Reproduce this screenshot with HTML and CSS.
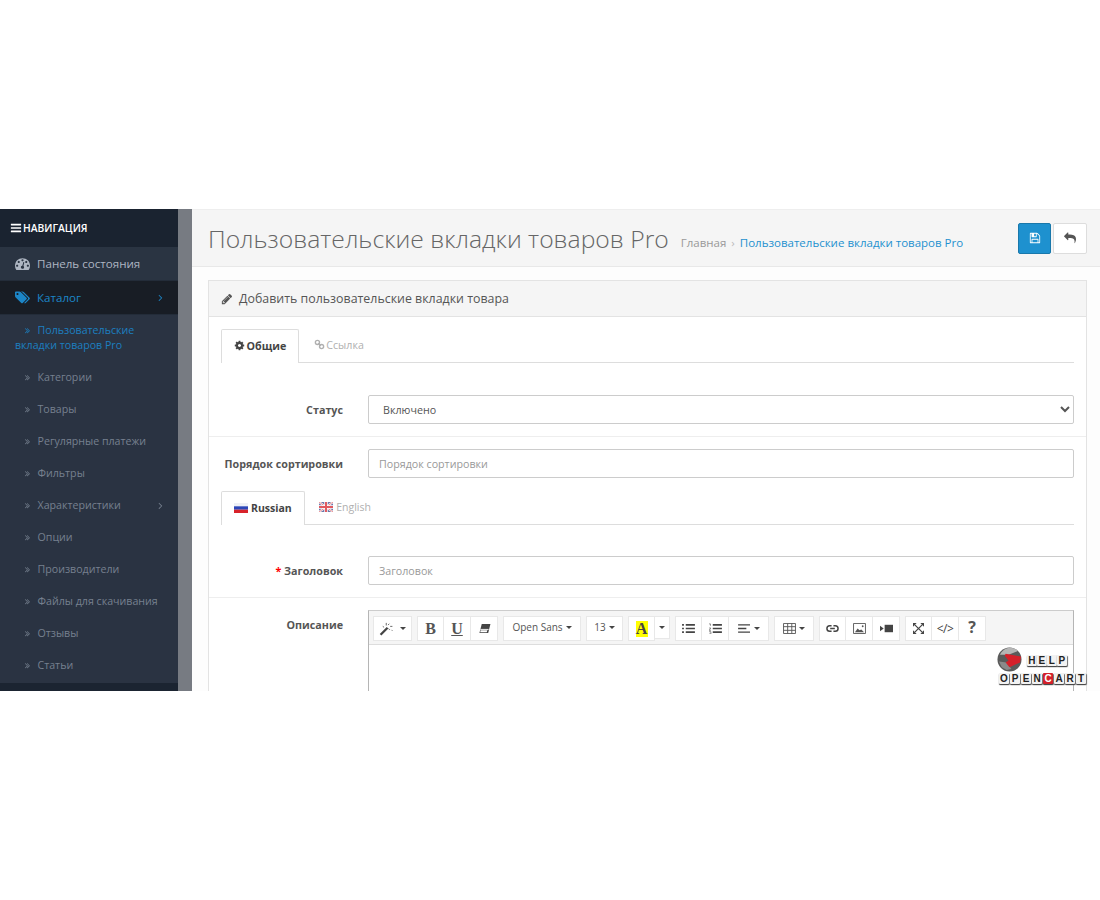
FILE: index.html
```html
<!DOCTYPE html>
<html>

<head>
    <meta charset="UTF-8">
    <title>Пользовательские вкладки товаров Pro</title>
    <link rel="stylesheet" href="styles.css">
</head>

<body>

    <svg class="sprite" xmlns="http://www.w3.org/2000/svg">
        <symbol id="i-bars" viewBox="0 0 1792 1792"><path d="M1664 1344v128q0 26-19 45t-45 19h-1408q-26 0-45-19t-19-45v-128q0-26 19-45t45-19h1408q26 0 45 19t19 45zm0-512v128q0 26-19 45t-45 19h-1408q-26 0-45-19t-19-45v-128q0-26 19-45t45-19h1408q26 0 45 19t19 45zm0-512v128q0 26-19 45t-45 19h-1408q-26 0-45-19t-19-45v-128q0-26 19-45t45-19h1408q26 0 45 19t19 45z"/></symbol>
        <symbol id="i-gauge" viewBox="0 0 1792 1792"><path d="M384 1152q0-53-37.5-90.5t-90.5-37.5-90.5 37.5-37.5 90.5 37.5 90.5 90.5 37.5 90.5-37.5 37.5-90.5zm192-448q0-53-37.5-90.5t-90.5-37.5-90.5 37.5-37.5 90.5 37.5 90.5 90.5 37.5 90.5-37.5 37.5-90.5zm428 481l101-382q6-26-7.5-48.5t-38.5-29.5-48 6.5-30 39.5l-101 382q-60 5-107 43.5t-63 98.5q-20 77 20 146t117 89 146-20 89-117q16-60-6-117t-72-91zm660-33q0-53-37.5-90.5t-90.5-37.5-90.5 37.5-37.5 90.5 37.5 90.5 90.5 37.5 90.5-37.5 37.5-90.5zm-640-640q0-53-37.5-90.5t-90.5-37.5-90.5 37.5-37.5 90.5 37.5 90.5 90.5 37.5 90.5-37.5 37.5-90.5zm448 192q0-53-37.5-90.5t-90.5-37.5-90.5 37.5-37.5 90.5 37.5 90.5 90.5 37.5 90.5-37.5 37.5-90.5zm320 448q0 261-141 483-19 29-54 29h-1402q-35 0-54-29-141-221-141-483 0-182 71-348t191-286 286-191 348-71 348 71 286 191 191 286 71 348z"/></symbol>
        <symbol id="i-tags" viewBox="0 0 1920 1792"><path d="M448 448q0-53-37.5-90.5t-90.5-37.5-90.5 37.5-37.5 90.5 37.5 90.5 90.5 37.5 90.5-37.5 37.5-90.5zm1067 576q0 53-37 90l-491 492q-39 37-91 37-53 0-90-37l-715-716q-38-37-64.5-101t-26.5-117v-416q0-52 38-90t90-38h416q53 0 117 26.5t102 64.5l715 714q37 39 37 91zm384 0q0 53-37 90l-491 492q-38 37-90 37-36 0-59-14t-53-45l470-470q37-37 37-90 0-52-37-91l-715-714q-38-38-102-64.5t-117-26.5h224q53 0 117 26.5t102 64.5l715 714q37 39 37 91z"/></symbol>
        <symbol id="i-angle" viewBox="0 0 1792 1792"><path d="M1171 960q0 13-10 23l-466 466q-10 10-23 10t-23-10l-50-50q-10-10-10-23t10-23l393-393-393-393q-10-10-10-23t10-23l50-50q10-10 23-10t23 10l466 466q10 10 10 23z"/></symbol>
        <symbol id="i-angles" viewBox="0 0 1792 1792"><path d="M979 960q0 13-10 23l-466 466q-10 10-23 10t-23-10l-50-50q-10-10-10-23t10-23l393-393-393-393q-10-10-10-23t10-23l50-50q10-10 23-10t23 10l466 466q10 10 10 23zm384 0q0 13-10 23l-466 466q-10 10-23 10t-23-10l-50-50q-10-10-10-23t10-23l393-393-393-393q-10-10-10-23t10-23l50-50q10-10 23-10t23 10l466 466q10 10 10 23z"/></symbol>
        <symbol id="i-pencil" viewBox="0 0 1792 1792"><path d="M491 1536l91-91-235-235-91 91v107h128v128h107zm523-928q0-22-22-22-10 0-17 7l-542 542q-7 7-7 17 0 22 22 22 10 0 17-7l542-542q7-7 7-17zm-54-192l416 416-832 832h-416v-416zm683 96q0 53-37 90l-166 166-416-416 166-165q36-38 90-38 53 0 91 38l235 234q37 39 37 91z"/></symbol>
        <symbol id="i-save" viewBox="0 0 1792 1792"><path d="M512 1536h768v-384h-768v384zm896 0h128v-896q0-14-10-38.5t-20-34.5l-281-281q-10-10-34-20t-39-10v416q0 40-28 68t-68 28h-576q-40 0-68-28t-28-68v-416h-128v1280h128v-416q0-40 28-68t68-28h832q40 0 68 28t28 68v416zm-384-928v-320q0-13-9.5-22.5t-22.5-9.5h-192q-13 0-22.5 9.5t-9.5 22.5v320q0 13 9.5 22.5t22.5 9.5h192q13 0 22.5-9.5t9.5-22.5zm640 32v928q0 40-28 68t-68 28h-1344q-40 0-68-28t-28-68v-1344q0-40 28-68t68-28h928q40 0 88 20t76 48l280 280q28 28 48 76t20 88z"/></symbol>
        <symbol id="i-reply" viewBox="0 0 1792 1792"><path d="M1792 1120q0 166-127 451-3 7-10.5 24t-13.5 30-13 22q-12 17-28 17-15 0-23.5-10t-8.5-25q0-9 2.5-26.5t2.5-23.5q5-68 5-123 0-101-17.5-181t-48.5-138.5-80-101-105.5-69.5-133-42.5-154-21.5-175.5-6h-224v256q0 26-19 45t-45 19-45-19l-512-512q-19-19-19-45t19-45l512-512q19-19 45-19t45 19 19 45v256h224q713 0 875 403 53 134 53 333z"/></symbol>
        <symbol id="i-cog" viewBox="0 0 1792 1792"><path d="M1152 896q0-106-75-181t-181-75-181 75-75 181 75 181 181 75 181-75 75-181zm512-109v222q0 12-8 23t-20 13l-185 28q-19 54-39 91 35 50 107 138 10 12 10 25t-9 23q-27 37-99 108t-94 71q-12 0-26-9l-138-108q-44 23-91 38-16 136-29 186-7 28-36 28h-222q-14 0-24.5-8.5t-11.5-21.5l-28-184q-49-16-90-37l-141 107q-10 9-25 9-14 0-25-11-126-114-165-168-7-10-7-23 0-12 8-23 15-21 51-66.5t54-70.5q-27-50-41-99l-183-27q-13-2-21-12.5t-8-23.5v-222q0-12 8-23t19-13l186-28q14-46 39-92-40-57-107-138-10-12-10-24 0-10 9-23 26-36 98.5-107.5t94.5-71.5q13 0 26 10l138 107q44-23 91-38 16-136 29-186 7-28 36-28h222q14 0 24.5 8.5t11.5 21.5l28 184q49 16 90 37l142-107q9-9 24-9 13 0 25 10 129 119 165 170 7 8 7 22 0 12-8 23-15 21-51 66.5t-54 70.5q26 50 41 98l183 28q13 2 21 12.5t8 23.5z"/></symbol>
        <symbol id="i-chain" viewBox="0 0 16 16"><g fill="none" stroke="currentColor" stroke-width="2"><circle cx="5" cy="5" r="3"/><circle cx="11" cy="11" r="3"/><path d="M6 6l4 4"/></g></symbol>
    </svg>

    <div class="shot">
        <!-- левая колонка -->
        <aside class="sidebar">
            <div class="nav-title"><svg class="ic ic-bars"><use href="#i-bars"/></svg>НАВИГАЦИЯ</div>
            <ul class="menu">
                <li class="menu-top"><svg class="ic ic-top"><use href="#i-gauge"/></svg>Панель состояния</li>
                <li class="menu-top active"><svg class="ic ic-top"><use href="#i-tags"/></svg>Каталог<svg class="ic ic-more"><use href="#i-angle"/></svg></li>
                <li class="menu-sub current"><svg class="ic ic-sub"><use href="#i-angles"/></svg>Пользовательские вкладки товаров Pro</li>
                <li class="menu-sub"><svg class="ic ic-sub"><use href="#i-angles"/></svg>Категории</li>
                <li class="menu-sub"><svg class="ic ic-sub"><use href="#i-angles"/></svg>Товары</li>
                <li class="menu-sub"><svg class="ic ic-sub"><use href="#i-angles"/></svg>Регулярные платежи</li>
                <li class="menu-sub"><svg class="ic ic-sub"><use href="#i-angles"/></svg>Фильтры</li>
                <li class="menu-sub"><svg class="ic ic-sub"><use href="#i-angles"/></svg>Характеристики<svg class="ic ic-more"><use href="#i-angle"/></svg></li>
                <li class="menu-sub"><svg class="ic ic-sub"><use href="#i-angles"/></svg>Опции</li>
                <li class="menu-sub"><svg class="ic ic-sub"><use href="#i-angles"/></svg>Производители</li>
                <li class="menu-sub"><svg class="ic ic-sub"><use href="#i-angles"/></svg>Файлы для скачивания</li>
                <li class="menu-sub"><svg class="ic ic-sub"><use href="#i-angles"/></svg>Отзывы</li>
                <li class="menu-sub"><svg class="ic ic-sub"><use href="#i-angles"/></svg>Статьи</li>
            </ul>
        </aside>
        <div class="gutter"></div>

        <main class="content">
            <div class="page-header">
                <h1>Пользовательские вкладки товаров Pro</h1>
                <div class="crumbs">
                    <span class="crumb-home">Главная</span>
                    <span class="crumb-sep">›</span>
                    <span class="crumb-link">Пользовательские вкладки товаров Pro</span>
                </div>
                <div class="actions">
                    <button class="btn btn-save"><svg class="ic"><use href="#i-save"/></svg></button>
                    <button class="btn btn-back"><svg class="ic"><use href="#i-reply"/></svg></button>
                </div>
            </div>

            <div class="panel">
                <div class="panel-heading"><svg class="ic ic-pencil"><use href="#i-pencil"/></svg>Добавить пользовательские вкладки товара</div>
                <div class="panel-body">
                    <div class="tabs">
                        <div class="tab tab-on"><svg class="ic ic-tab"><use href="#i-cog"/></svg>Общие</div>
                        <div class="tab"><svg class="ic ic-tab"><use href="#i-chain"/></svg>Ссылка</div>
                    </div>

                    <div class="form-row row-first">
                        <label>Статус</label>
                        <select class="field">
                            <option>Включено</option>
                        </select>
                    </div>
                    <div class="form-row row-sort">
                        <label>Порядок сортировки</label>
                        <input class="field" placeholder="Порядок сортировки">
                    </div>

                    <div class="tabs tabs-lang">
                        <div class="tab tab-on">
                            <svg class="flag" viewBox="0 0 14 10"><rect width="14" height="3.3" fill="#eef0f6"/><rect y="3.3" width="14" height="3.4" fill="#2b46b8"/><rect y="6.7" width="14" height="3.3" fill="#d8222a"/></svg>Russian
                        </div>
                        <div class="tab">
                            <svg class="flag flag-en" viewBox="0 0 14 10"><rect width="14" height="10" fill="#3e4a8c"/><path d="M0 0l14 10M14 0L0 10" stroke="#fff" stroke-width="2"/><path d="M0 0l14 10M14 0L0 10" stroke="#d8222a" stroke-width=".7"/><path d="M7 0v10M0 5h14" stroke="#fff" stroke-width="3.4"/><path d="M7 0v10M0 5h14" stroke="#d8222a" stroke-width="2"/></svg>English
                        </div>
                    </div>

                    <div class="form-row row-title">
                        <label><span class="req">*</span> Заголовок</label>
                        <input class="field" placeholder="Заголовок">
                    </div>
                    <div class="form-row row-desc">
                        <label>Описание</label>
                        <div class="editor">
                            <div class="toolbar">
                                <div class="group"><button class="tb tb-magic">
                                    <svg class="tb-svg" viewBox="0 0 20 16"><path d="M1.500 14.500l8-8" stroke="#444" stroke-width="2.600" fill="none"/><path d="M8 1v3M12.500 5H15M11.500 2l-1.500 1.500M12 9l-1.500-1.500M4 5l1.500 1M14 9l1 1" stroke="#555" stroke-width="1" fill="none"/></svg><i class="caret"></i></button></div>
                                <div class="group">
                                    <button class="tb tb-letter">B</button>
                                    <button class="tb tb-letter tb-u">U</button>
                                    <button class="tb"><svg class="tb-svg" viewBox="0 0 14 12"><path d="M4 1h9.500l-2.500 10H1.500z" fill="#444"/><path d="M2.500 7h9" stroke="#fff" stroke-width="1"/><path d="M2.800 8h7.400l-.8 2H2.300z" fill="#fff"/></svg></button>
                                </div>
                                <div class="group"><button class="tb tb-font">Open Sans<i class="caret"></i></button></div>
                                <div class="group"><button class="tb tb-size">13<i class="caret"></i></button></div>
                                <div class="group group-color">
                                    <button class="tb tb-color"><span class="hl">A</span></button>
                                    <button class="tb tb-drop"><i class="caret"></i></button>
                                </div>
                                <div class="group">
                                    <button class="tb"><svg class="tb-svg" viewBox="0 0 14 12"><path d="M4 2h10M4 6h10M4 10h10M0 2h2M0 6h2M0 10h2" stroke="#444" stroke-width="1.800"/></svg></button>
                                    <button class="tb"><svg class="tb-svg" viewBox="0 0 14 12"><path d="M4 2h10M4 6h10M4 10h10" stroke="#444" stroke-width="1.800"/><path d="M0 1h1.500v2M0 5.500h2L0 8h2M0 9.500h2V12H0" stroke="#555" stroke-width=".7" fill="none"/></svg></button>
                                    <button class="tb tb-wide"><svg class="tb-svg" viewBox="0 0 14 12"><path d="M0 2h13M0 6h9M0 10h13" stroke="#444" stroke-width="1.500"/></svg><i class="caret"></i></button>
                                </div>
                                <div class="group"><button class="tb tb-wide"><svg class="tb-svg" viewBox="0 0 14 12"><path d="M.5 .5h13v11H.5zM.5 4h13M.5 8h13M5 .5v11M9.500 .5v11" stroke="#555" stroke-width="1" fill="none"/></svg><i class="caret"></i></button></div>
                                <div class="group">
                                    <button class="tb"><svg class="tb-svg" viewBox="0 0 14 10"><path d="M6 2H4a3 3 0 0 0 0 6h2M8 2h2a3 3 0 0 1 0 6H8M4.500 5h5" stroke="#444" stroke-width="1.600" fill="none"/></svg></button>
                                    <button class="tb"><svg class="tb-svg" viewBox="0 0 14 12"><path d="M.5 .5h13v11H.5z" stroke="#555" fill="none"/><path d="M2 10l3-4 2 2 2-1 3 3z" fill="#555"/><circle cx="10.500" cy="3.500" r="1" fill="#555"/></svg></button>
                                    <button class="tb"><svg class="tb-svg" viewBox="0 0 14 10"><rect x="5" y="1" width="9" height="8" fill="#444"/><path d="M0 2l4 3-4 3z" fill="#444"/></svg></button>
                                </div>
                                <div class="group">
                                    <button class="tb"><svg class="tb-svg" viewBox="0 0 12 12"><path d="M2 2l8 8M10 2l-8 8" stroke="#444" stroke-width="1.300"/><path d="M0 0h4L0 4zM12 0v4L8 0zM0 12V8l4 4zM12 12H8l4-4z" fill="#444"/></svg></button>
                                    <button class="tb tb-code">&lt;/&gt;</button>
                                    <button class="tb tb-help">?</button>
                                </div>
                            </div>
                            <div class="editor-body"></div>
                        </div>
                    </div>
                </div>
            </div>

            <!-- логотип поверх редактора -->
            <div class="logo">
                <svg class="logo-ball" viewBox="0 0 26 26">
                    <circle cx="13" cy="13" r="12.500" fill="#5a5a5a"/>
                    <path d="M3 8a12 12 0 0 1 19-4L12 8z" fill="#b5b5b5"/>
                    <path d="M2 15l3 6 5 3 5-1-5-7z" fill="#8a8a8a"/>
                    <path d="M9 7l16 3-1 6-11 5-4-5 3-2-4-5z" fill="#d4202a"/>
                </svg>
                <div class="logo-line logo-help"><b>H</b><b>E</b><b>L</b><b>P</b></div>
                <div class="logo-line logo-oc"><b>O</b><b>P</b><b>E</b><b>N</b><b class="red">C</b><b>A</b><b>R</b><b>T</b></div>
            </div>
        </main>
    </div>

</body>

</html>
```

FILE: styles.css
```css
/* общие стили */
body {
    margin: 0;
    padding: 209px 0 0;
    background: #fff;
    font-family: "Open Sans", sans-serif;
    font-size: 12px;
    color: #666;
}

.sprite {
    display: none;
}

.ic {
    width: 1em;
    height: 1em;
    fill: currentColor;
    flex: none;
}

/* кадр со скриншотом */
.shot {
    display: flex;
    height: 482px;
    overflow: hidden;
}

/* боковое меню */
.sidebar {
    width: 178px;
    flex: none;
    background: #1b2431;
    color: #8a94a3;
}

.gutter {
    width: 14px;
    flex: none;
    background: #777b82;
}

.nav-title {
    height: 38px;
    display: flex;
    align-items: center;
    padding: 0 0 1px 10px;
    box-sizing: border-box;
    color: #fff;
    font-size: 10.3px;
    font-weight: 600;
    background: #1a2330;
}

.ic-bars {
    font-size: 12px;
    margin-right: 1px;
}

.menu {
    list-style: none;
    margin: 0;
    padding: 0;
    background: #2a3342;
}

.menu-top {
    height: 33px;
    display: flex;
    align-items: center;
    padding: 0 12px 0 15px;
    font-size: 11.6px;
    color: #aeb6c2;
    background: #2a3442;
    border-bottom: 1px solid #232c39;
}

.menu-top.active {
    color: #1c86c8;
    background: #181d25;
}

.ic-top {
    font-size: 15px;
    width: 15px;
    margin-right: 7px;
}

.ic-more {
    font-size: 11px;
    margin-left: auto;
}

.menu-sub {
    height: 32px;
    display: flex;
    align-items: center;
    padding: 0 12px 0 23px;
    font-size: 10.65px;
    color: #76808f;
}

.menu-sub:last-child {
    padding-bottom: 2px;
}

.ic-sub {
    font-size: 9px;
    margin-right: 5.5px;
}

.menu-sub.current {
    display: block;
    height: auto;
    padding: 8px 10px 8px 15px;
    line-height: 15px;
    color: #1c7fc0;
    text-indent: 8px;
}

.menu-sub.current .ic-sub {
    vertical-align: -1px;
}

/* контент */
.content {
    flex: 1;
    min-width: 0;
    position: relative;
    background: #fdfdfd;
}

.page-header {
    height: 58px;
    display: flex;
    align-items: center;
    padding: 0 13px 0 16px;
    background: #f5f5f5;
    border-bottom: 1px solid #e8e8e8;
    border-top: 1px solid #eee;
    box-sizing: border-box;
}

h1 {
    margin: 0;
    font-size: 24.7px;
    font-weight: 300;
    color: #666;
    white-space: nowrap;
}

.crumbs {
    display: flex;
    gap: 5px;
    margin: 8px 0 0 12px;
    font-size: 11.5px;
}

.crumb-home {
    color: #999;
}

.crumb-sep {
    color: #bbb;
}

.crumb-link {
    color: #1e91cf;
}

.actions {
    display: flex;
    gap: 2px;
    margin-left: auto;
}

.btn {
    width: 33px;
    height: 31px;
    padding: 0;
    display: flex;
    align-items: center;
    justify-content: center;
    border-radius: 2px;
    font-size: 12px;
}

.btn-save {
    color: #fff;
    background: #1e91cf;
    border: 1px solid #1978ab;
}

.btn-back {
    width: 34px;
    color: #555;
    background: #fff;
    border: 1px solid #ddd;
}

/* панель с формой */
.panel {
    margin: 13px 13px 0 16px;
    background: #fff;
    border: 1px solid #e3e3e3;
    border-bottom: 0;
}

.panel-heading {
    height: 35px;
    display: flex;
    align-items: center;
    padding-left: 12px;
    font-size: 12.4px;
    color: #555;
    background: #f5f5f5;
    border-bottom: 1px solid #e3e3e3;
}

.ic-pencil {
    font-size: 12px;
    margin-right: 6px;
}

.panel-body {
    padding: 12px 12px 0;
}

.tabs {
    display: flex;
    height: 33px;
    border-bottom: 1px solid #ddd;
}

.tab {
    display: flex;
    align-items: center;
    padding: 0 12.5px 0 14.5px;
    font-size: 10.7px;
    color: #b0b0b0;
    height: 31px;
}

.tab-on {
    height: 34px;
    padding: 0 12px 2px;
    box-sizing: border-box;
    color: #444;
    font-weight: 700;
    background: #fff;
    border: 1px solid #ddd;
    border-bottom: 0;
    border-radius: 2px 2px 0 0;
}

.ic-tab {
    font-size: 11px;
    margin-right: 1.5px;
}

.tabs-lang .tab {
    font-size: 10.5px;
}

.flag {
    width: 14px;
    height: 10px;
    margin-right: 3px;
}

.flag-en {
    opacity: .75;
}

.form-row {
    display: flex;
    margin: 0 -12px;
    padding: 0 12px;
}

.form-row label {
    width: 122px;
    flex: none;
    box-sizing: border-box;
    text-align: right;
    font-size: 10.75px;
    font-weight: 700;
    color: #555;
    line-height: 30px;
}

.form-row .field,
.editor {
    flex: 1;
    min-width: 0;
    margin-left: 25px;
}

.field {
    height: 29px;
    box-sizing: border-box;
    padding: 0 10px;
    font: 10.7px "Open Sans", sans-serif;
    color: #555;
    background: #fff;
    border: 1px solid #ccc;
    border-radius: 2px;
}

.field::placeholder {
    color: #999;
}

.row-first {
    padding-top: 32px;
    padding-bottom: 11px;
    border-bottom: 1px solid #eee;
}

.row-sort {
    padding-top: 12px;
    padding-bottom: 12px;
}

.row-title {
    padding-top: 31px;
    padding-bottom: 11px;
    border-bottom: 1px solid #eee;
}

.row-desc {
    padding-top: 12px;
}

.req {
    color: #f00;
}

/* редактор */
.editor {
    border: 1px solid #b5b5b5;
    border-top-color: #ccc;
    border-bottom: 0;
}

.toolbar {
    display: flex;
    gap: 5px;
    height: 34px;
    box-sizing: border-box;
    padding: 5px 0 0 4px;
    background: #f5f5f5;
    border-bottom: 1px solid #ddd;
}

.group {
    display: flex;
    height: 25px;
}

.tb {
    width: 27px;
    height: 25px;
    padding: 0;
    display: flex;
    align-items: center;
    justify-content: center;
    gap: 3px;
    font: 10px "Open Sans", sans-serif;
    color: #444;
    background: #fff;
    border: 1px solid #e8e8e8;
    border-left-width: 0;
}

.tb:first-child {
    border-left-width: 1px;
}

.tb-svg {
    width: 13px;
    height: 11px;
    flex: none;
}

.tb-magic {
    width: 39px;
}

.tb-magic .tb-svg {
    width: 18px;
    height: 14px;
}

.tb-letter {
    font: 700 16px "Liberation Serif", serif;
    color: #555;
}

.tb-u {
    text-decoration: underline;
}

.tb-font {
    width: 78px;
    padding-bottom: 3px;
    color: #555;
}

.tb-size {
    width: 37px;
    padding-bottom: 3px;
    color: #555;
}

.tb-wide {
    width: 40px;
}

.tb-color {
    width: 27px;
}

.hl {
    display: block;
    width: 12px;
    height: 16px;
    font: 700 16px/16px "Liberation Serif", serif;
    color: #444;
    background: #ff0;
    text-align: center;
}

.tb-drop {
    width: 15px;
    height: 23px;
}

.tb-code {
    font: 12px "Open Sans", sans-serif;
    letter-spacing: -.5px;
}

.tb-help {
    padding-bottom: 3px;
    font: 700 16px "Open Sans", sans-serif;
    color: #555;
}

.caret {
    width: 0;
    height: 0;
    border: 3px solid transparent;
    border-top-color: #444;
    border-bottom: 0;
}

.editor-body {
    height: 60px;
    background: #fff;
}

/* логотип */
.logo {
    position: absolute;
    left: 805px;
    top: 438px;
    width: 92px;
    height: 42px;
}

.logo-ball {
    position: absolute;
    left: 0;
    top: 0;
    width: 25px;
    height: 25px;
}

.logo-line {
    position: absolute;
    display: flex;
    gap: 1px;
    font: 700 10px/11px "Liberation Sans", sans-serif;
    color: #222;
}

.logo-line b {
    width: 10px;
    text-align: center;
    background: #f2f2f2;
    border-radius: 1px;
    box-shadow: 0 1px 1px #444, 1px 1px 1px #777;
}

.logo-help {
    left: 30px;
    top: 8px;
    gap: .5px;
}

.logo-help b {
    width: 9.5px;
}

.logo-oc {
    left: 2px;
    top: 26px;
}

.logo-line .red {
    background: #d4202a;
    color: #fff;
}
```
